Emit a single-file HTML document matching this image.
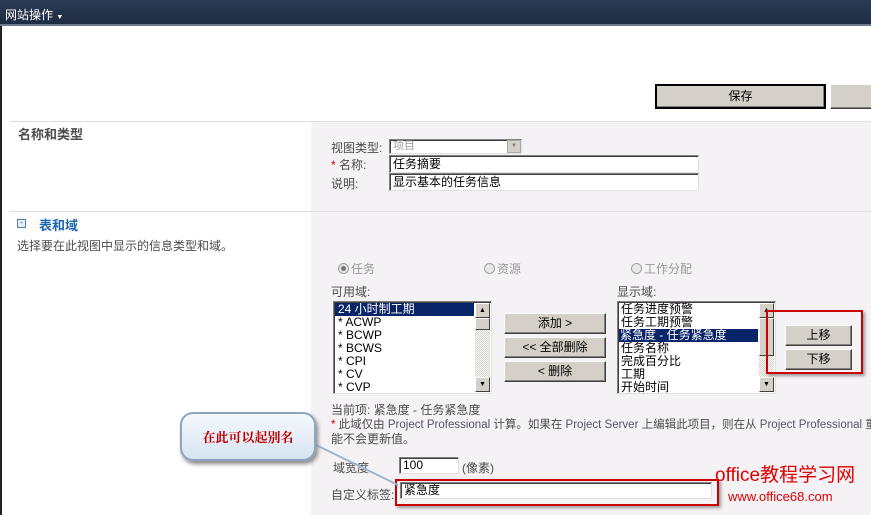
<!DOCTYPE html>
<html><head><meta charset="utf-8"><style>
*{margin:0;padding:0;box-sizing:border-box}
body{width:871px;height:515px;overflow:hidden;background:#fff;position:relative;font-family:"Liberation Sans","Noto Sans CJK SC",sans-serif;font-size:12px;color:#4c4c4c}
.a{position:absolute;white-space:nowrap}
.btn{position:absolute;background:#d4d0c8;border:1px solid;border-color:#fff #404040 #404040 #fff;box-shadow:inset -1px -1px 0 #808080;text-align:center;color:#000;font-size:12px}
.inp{position:absolute;background:#fff;border:1px solid;border-color:#808080 #e0e0e0 #e0e0e0 #808080;box-shadow:inset 1px 1px 0 #404040;color:#000;padding-left:3px;font-size:12px;line-height:16px}
.lb{position:absolute;background:#fff;border:1px solid;border-color:#808080 #e0e0e0 #e0e0e0 #808080;box-shadow:inset 1px 1px 0 #404040;color:#000;font-size:12px;line-height:13px;overflow:hidden}
.sb{position:absolute;top:1px;right:1px;bottom:1px;width:15px;background:repeating-conic-gradient(#fff 0 25%,#d4d0c8 0 50%) 0 0/2px 2px}
.sa{position:absolute;left:0;width:15px;height:15px;background:#d4d0c8;border:1px solid;border-color:#fff #404040 #404040 #fff;font-size:7px;text-align:center;line-height:13px;color:#000}
.rad{display:inline-block;width:11px;height:11px;border-radius:50%;border:1px solid #a0a0a0;background:#e8e8e8;vertical-align:-1px;margin-right:2px}
</style></head><body>
<div class="a" style="left:0;top:0;width:871px;height:26px;background:linear-gradient(#2a3a52,#1e2d42);border-bottom:2px solid #6c7a8c"></div>
<div class="a" style="left:5px;top:6px;color:#fff;font-size:12px">网站操作 <span style="font-size:7px">▼</span></div>
<div class="a" style="left:0;top:26px;width:2px;height:489px;background:#222"></div>
<div class="btn" style="left:655px;top:84px;width:171px;height:25px;border:2px solid #000;line-height:20px">保存</div>
<div class="btn" style="left:830px;top:84px;width:45px;height:25px"></div>
<div class="a" style="left:10px;top:121px;width:861px;height:1px;background:#ddd"></div>
<div class="a" style="left:311px;top:122px;width:560px;height:89px;background:#f5f2f5"></div>
<div class="a" style="left:18px;top:124px;font-weight:bold;color:#4c4c4c;font-size:13px">名称和类型</div>
<div class="a" style="left:331px;top:139px">视图类型:</div>
<div class="inp" style="left:389px;top:139px;width:133px;height:15px;color:#999;line-height:12px;font-size:11px">项目<div style="position:absolute;right:0;top:0;width:14px;height:13px;background:#d4d0c8;border:1px solid #aaa;font-size:6px;text-align:center;line-height:11px;color:#777">▼</div></div>
<div class="a" style="left:331px;top:156px"><span style="color:#c00">*</span> 名称:</div>
<div class="inp" style="left:389px;top:155px;width:310px;height:18px">任务摘要</div>
<div class="a" style="left:331px;top:175px">说明:</div>
<div class="inp" style="left:389px;top:173px;width:310px;height:18px">显示基本的任务信息</div>
<div class="a" style="left:10px;top:211px;width:861px;height:1px;background:#ddd"></div>
<div class="a" style="left:311px;top:212px;width:560px;height:303px;background:#f5f2f5"></div>
<div class="a" style="left:17px;top:219px;width:9px;height:9px;border:1px solid #5a7aa0;background:#e8eef6;font-size:8px;line-height:6px;text-align:center;color:#234">-</div>
<div class="a" style="left:39px;top:215px;font-weight:bold;color:#1d66b4;font-size:13px">表和域</div>
<div class="a" style="left:17px;top:237px">选择要在此视图中显示的信息类型和域。</div>
<div class="a" style="left:338px;top:260px;color:#999"><span class="rad" style="background:radial-gradient(#777 2px,#e8e8e8 3px)"></span>任务</div>
<div class="a" style="left:484px;top:260px;color:#999"><span class="rad"></span>资源</div>
<div class="a" style="left:631px;top:260px;color:#999"><span class="rad"></span>工作分配</div>
<div class="a" style="left:331px;top:283px">可用域:</div>
<div class="a" style="left:617px;top:283px">显示域:</div>
<div class="lb" style="left:333px;top:301px;width:159px;height:93px">
<div style="background:#0a246a;color:#fff;padding-left:3px;margin:1px 17px 0 1px">24 小时制工期</div>
<div style="padding-left:4px">* ACWP</div><div style="padding-left:4px">* BCWP</div><div style="padding-left:4px">* BCWS</div><div style="padding-left:4px">* CPI</div><div style="padding-left:4px">* CV</div><div style="padding-left:4px">* CVP</div>
<div class="sb"><div class="sa" style="top:0">▲</div><div class="sa" style="top:15px;height:12px"></div><div class="sa" style="bottom:0">▼</div></div></div>
<div class="lb" style="left:617px;top:301px;width:159px;height:93px">
<div style="padding-left:3px;margin-top:1px">任务进度预警</div><div style="padding-left:3px">任务工期预警</div>
<div style="background:#0a246a;color:#fff;padding-left:1px;margin:0 17px 0 1px">紧急度 - 任务紧急度</div>
<div style="padding-left:3px">任务名称</div><div style="padding-left:3px">完成百分比</div><div style="padding-left:3px">工期</div><div style="padding-left:3px">开始时间</div>
<div class="sb"><div class="sa" style="top:0">▲</div><div class="sa" style="top:15px;height:38px"></div><div class="sa" style="bottom:0">▼</div></div></div>
<div class="btn" style="left:504px;top:313px;width:102px;height:21px;line-height:19px">添加 &gt;</div>
<div class="btn" style="left:504px;top:337px;width:102px;height:21px;line-height:19px">&lt;&lt; 全部删除</div>
<div class="btn" style="left:504px;top:361px;width:102px;height:21px;line-height:19px">&lt; 删除</div>
<div class="btn" style="left:785px;top:325px;width:67px;height:21px;line-height:19px">上移</div>
<div class="btn" style="left:785px;top:349px;width:67px;height:21px;line-height:19px">下移</div>
<div class="a" style="left:766px;top:310px;width:97px;height:64px;border:2px solid #c00;box-shadow:2px 2px 3px #999"></div>
<div class="a" style="left:331px;top:401px">当前项: 紧急度 - 任务紧急度</div>
<div class="a" style="left:331px;top:416px;font-size:11.5px"><span style="color:#c00">*</span> 此域仅由 <span style="color:#556">Project Professional</span> 计算。如果在 <span style="color:#556">Project Server</span> 上编辑此项目，则在从 <span style="color:#556">Project Professional</span> 重新</div>
<div class="a" style="left:331px;top:430px">能不会更新值。</div>
<div class="a" style="left:333px;top:459px">域宽度</div>
<div class="inp" style="left:399px;top:457px;width:60px;height:17px;line-height:15px">100</div>
<div class="a" style="left:462px;top:459px">(像素)</div>
<div class="a" style="left:331px;top:486px">自定义标签:</div>
<div class="inp" style="left:400px;top:482px;width:312px;height:17px;line-height:15px">紧急度</div>
<div class="a" style="left:395px;top:479px;width:324px;height:27px;border:2px solid #c00;box-shadow:2px 2px 3px #999"></div>
<svg class="a" style="left:0;top:0" width="871" height="515"><line x1="312" y1="443" x2="398" y2="485" stroke="#9fb3cc" stroke-width="2"/></svg>
<div class="a" style="left:180px;top:412px;width:136px;height:49px;border-radius:13px;background:linear-gradient(#f4f8fc,#d8e4f2);border:2px solid #8ea4c0;box-shadow:2px 3px 4px #888;color:#c00000;font-weight:bold;font-size:13px;text-align:center;line-height:45px;font-family:'Noto Serif CJK SC',serif">在此可以起别名</div>
<div class="a" style="left:715px;top:460px;color:#d00;font-size:19px">office教程学习网</div>
<div class="a" style="left:728px;top:489px;color:#d00;font-size:13px">www.office68.com</div>
</body></html>
